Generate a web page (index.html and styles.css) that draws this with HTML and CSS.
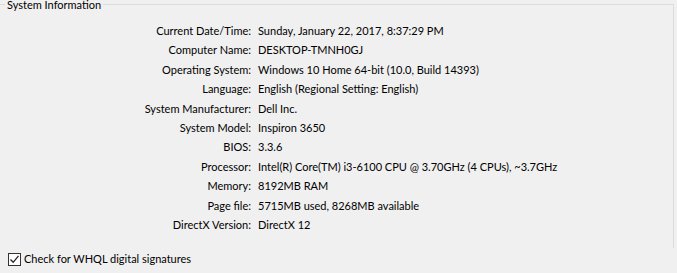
FILE: index.html
```html
<!DOCTYPE html>
<html lang="en">
<head>
    <meta charset="UTF-8">
    <title>System Information</title>
    <link rel="stylesheet" href="styles.css">
</head>
<body>
    <fieldset class="group">
        <legend>System Information</legend>
        <div class="info">
            <div class="label">Current Date/Time:</div><div class="value">Sunday, January 22, 2017, 8:37:29 PM</div>
            <div class="label">Computer Name:</div><div class="value">DESKTOP-TMNH0GJ</div>
            <div class="label">Operating System:</div><div class="value">Windows 10 Home 64-bit (10.0, Build 14393)</div>
            <div class="label">Language:</div><div class="value">English (Regional Setting: English)</div>
            <div class="label">System Manufacturer:</div><div class="value">Dell Inc.</div>
            <div class="label">System Model:</div><div class="value">Inspiron 3650</div>
            <div class="label">BIOS:</div><div class="value">3.3.6</div>
            <div class="label">Processor:</div><div class="value">Intel(R) Core(TM) i3-6100 CPU @ 3.70GHz (4 CPUs), ~3.7GHz</div>
            <div class="label">Memory:</div><div class="value">8192MB RAM</div>
            <div class="label">Page file:</div><div class="value">5715MB used, 8268MB available</div>
            <div class="label">DirectX Version:</div><div class="value">DirectX 12</div>
        </div>
    </fieldset>
    <label class="check">
        <span class="box">
            <svg width="11" height="11" viewBox="0 0 11 11"><path d="M1.5 5.5 L4.2 8.3 L9.5 1.8" fill="none" stroke="#222" stroke-width="1.3"/></svg>
        </span>
        Check for WHQL digital signatures
    </label>
</body>
</html>
```

FILE: styles.css
```css
body {
    margin: 0;
    background: #f0f0f0;
    font-family: Lato, "Liberation Sans", sans-serif;
    font-size: 11px;
    color: #000;
    width: 677px;
    height: 273px;
    overflow: hidden;
}

.group {
    margin: 0;
    width: 674px;
    box-sizing: border-box;
    border: 1px solid #dcdcdc;
    border-left: none;
    border-bottom: none;
    padding: 0;
    height: 248px;
}

.group legend {
    margin-left: 5px;
    padding: 0 2px;
    line-height: 9px;
}

.info {
    display: grid;
    grid-template-columns: 251px auto;
    column-gap: 7px;
    margin-top: 12px;
    line-height: 19.4px;
}

.label {
    text-align: right;
    white-space: nowrap;
}

.value {
    white-space: nowrap;
}

.check {
    display: flex;
    align-items: center;
    gap: 3px;
    margin: 4px 0 0 8px;
    line-height: 14px;
}

.check .box {
    width: 11px;
    height: 11px;
    border: 1px solid #333;
    background: #fff;
    display: flex;
}
```
